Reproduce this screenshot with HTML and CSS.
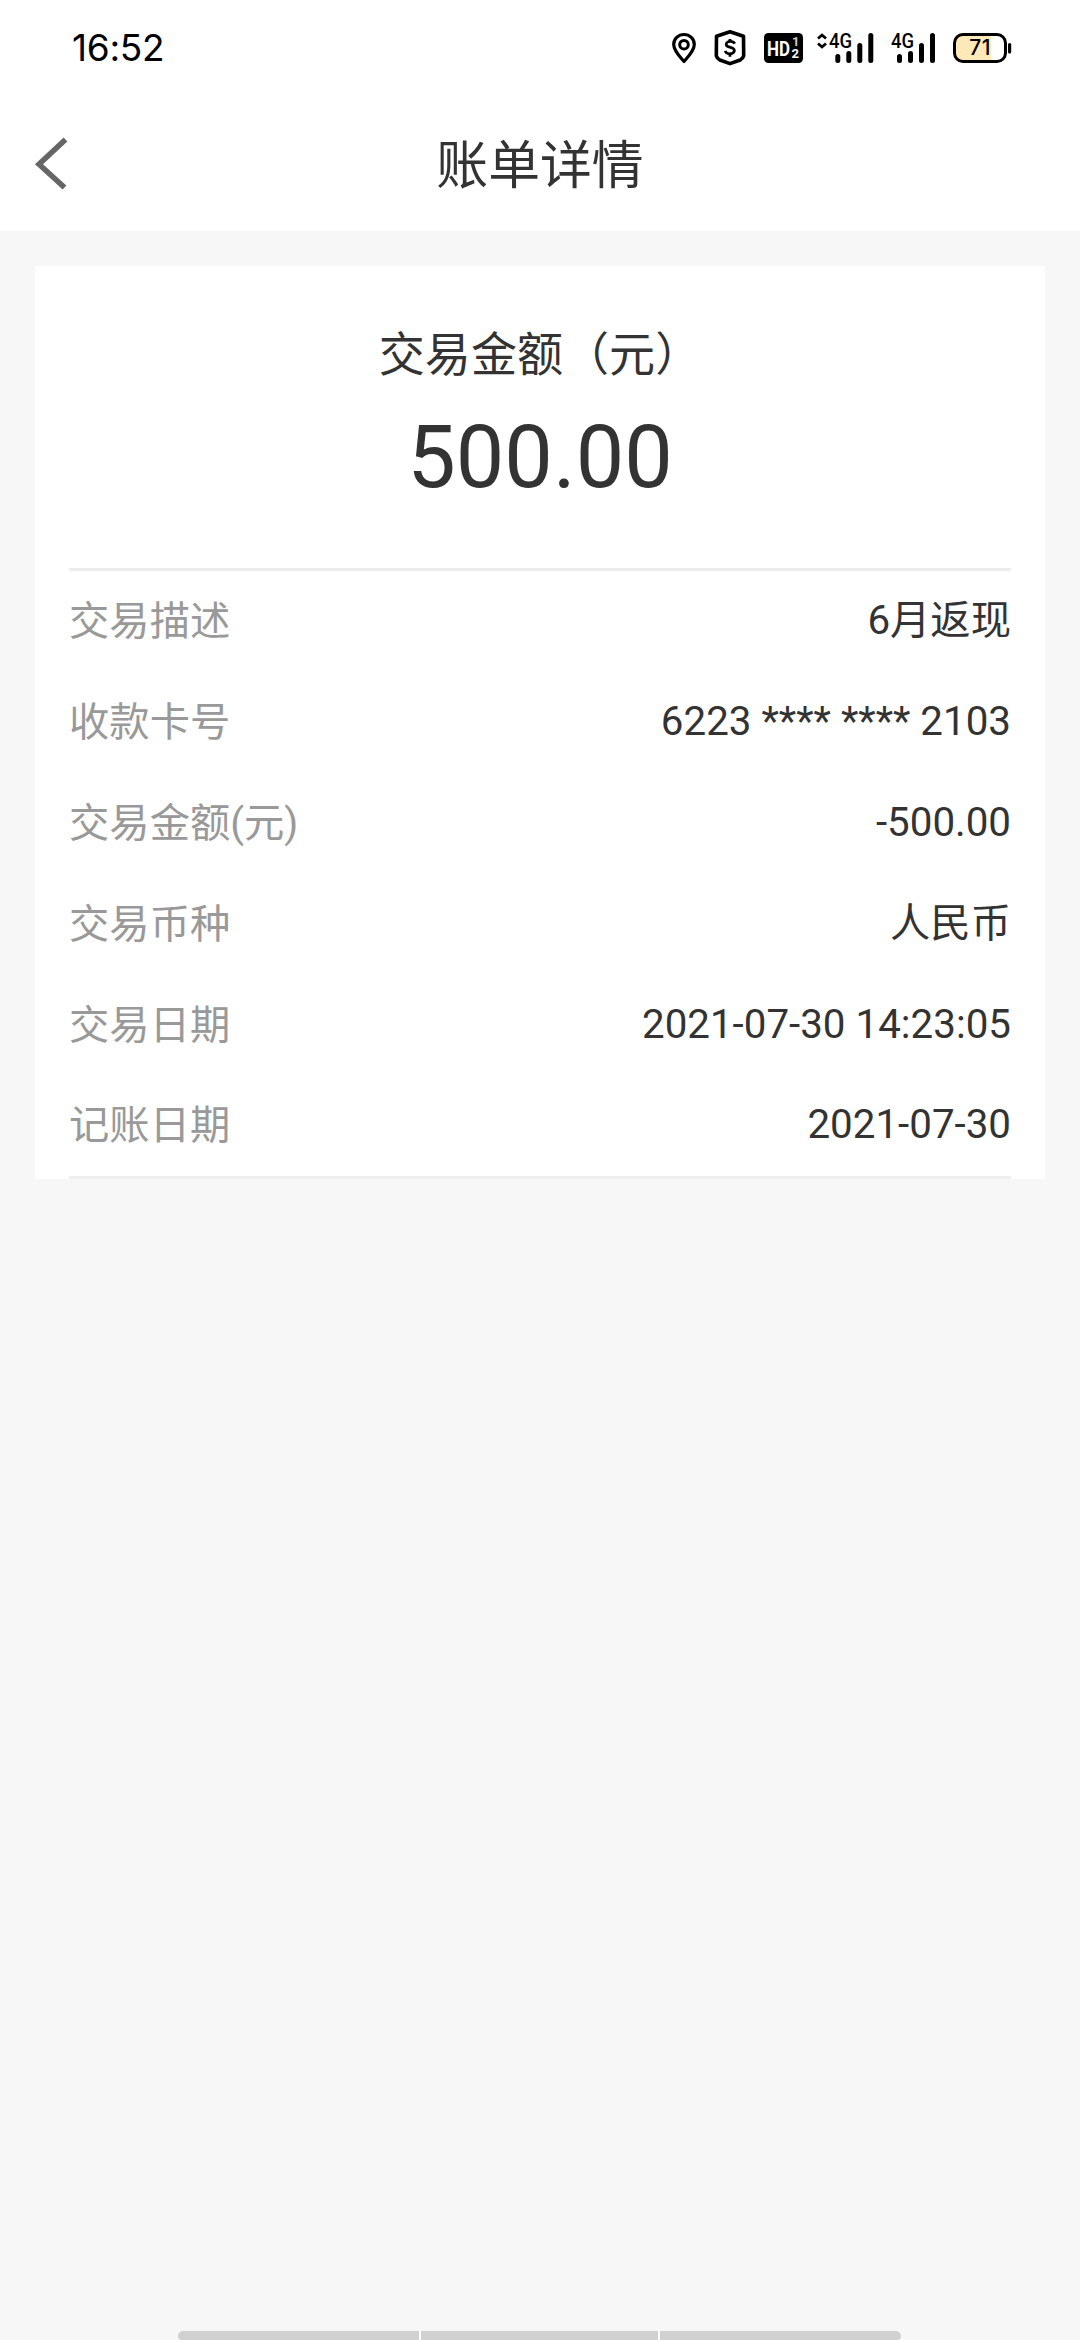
FILE: index.html
```
<!DOCTYPE html>
<html lang="zh-CN">
<head>
<meta charset="utf-8">
<title>账单详情</title>
<link rel="stylesheet" href="styles.css">
</head>
<body>
<div class="status-bar">
  <span class="clock">16:52</span>
  <div class="status-icons">
    <svg class="icon-pin" width="24" height="36" viewBox="0 0 24 36">
      <path d="M12 31.500C7.500 26.300 1.700 20.500 1.700 14.400a10.300 9.900 0 0 1 20.600 0C22.300 20.500 16.500 26.300 12 31.500Z" fill="none" stroke="#000" stroke-width="3.200" stroke-linejoin="round"/>
      <circle cx="12" cy="14.700" r="4.300" fill="none" stroke="#000" stroke-width="3"/>
    </svg>
    <svg class="icon-shield" width="32" height="36" viewBox="0 0 32 36">
      <path d="M16 1.700 29.500 6.200 29.700 25.800Q29 28.400 26.200 30L16 33.600 5.800 30Q3 28.400 2.300 25.800L2.500 6.200Z" fill="none" stroke="#000" stroke-width="3.600" stroke-linejoin="round"/>
      <path d="M20.800 13.700C19.600 11.300 16.500 11 14.300 11.700 11.700 12.600 11.400 15.700 14.200 16.700L18.200 18C21.200 19.200 20.900 22.400 18 23.400 15.500 24.200 12.300 23.700 11 21M16 9v3M16 23.500v3.300" fill="none" stroke="#000" stroke-width="2.800"/>
    </svg>
    <svg class="icon-hd" width="39" height="36" viewBox="0 0 39 36">
      <rect x="0" y="3" width="39" height="30" rx="4.500"/>
      <text class="hd-text" x="3" y="25.700" textLength="23" lengthAdjust="spacingAndGlyphs">HD</text>
      <text class="hd-sub dim" x="28" y="16.300">1</text>
      <text class="hd-sub" x="27.500" y="28.300">2</text>
    </svg>
    <svg class="icon-signal-main" width="57" height="36" viewBox="0 0 57 36">
      <path d="M1 8.500 5 5 9 8.500M1 13.500 5 17 9 13.500" fill="none" stroke="#000" stroke-width="2.800"/>
      <text class="net-text" x="12" y="17.500" textLength="23" lengthAdjust="spacingAndGlyphs">4G</text>
      <path d="M20.800 26.500v4M31.800 23.500v7M42.800 15.500v15M53.800 5.500v25" stroke="#000" stroke-width="5" stroke-linecap="round"/>
    </svg>
    <svg class="icon-signal" width="46" height="36" viewBox="0 0 46 36">
      <text class="net-text" x="1" y="17.500" textLength="23" lengthAdjust="spacingAndGlyphs">4G</text>
      <path d="M9.500 26.500v4M20.500 23.500v7M31.500 15.500v15M42.500 5.500v25" stroke="#000" stroke-width="5" stroke-linecap="round"/>
    </svg>
    <svg class="icon-battery" width="59" height="36" viewBox="0 0 59 36">
      <path d="M10 3H38V33H10Q1 33 1 24V12Q1 3 10 3Z" fill="#ffe9b8"/>
      <rect x="1.500" y="4.500" width="51" height="27" rx="8.500" fill="none" stroke="#000" stroke-width="3"/>
      <rect x="55" y="13" width="3.200" height="10.500" rx="1.500"/>
      <text class="battery-text" x="27" y="25.200" text-anchor="middle">71</text>
    </svg>
  </div>
</div>
<header class="title-bar">
  <svg class="back" width="38" height="56" viewBox="0 0 38 56">
    <path d="M31.500 3.500 5 28.200 30.500 51.500" fill="none" stroke="#666" stroke-width="5.500"/>
  </svg>
  <h1 class="title">账单详情</h1>
</header>
<main class="card">
  <section class="summary">
    <div class="summary-label">交易金额（元）</div>
    <div class="summary-amount">500.00</div>
  </section>
  <dl class="details">
    <div class="row"><dt>交易描述</dt><dd>6月返现</dd></div>
    <div class="row"><dt>收款卡号</dt><dd>6223 **** **** 2103</dd></div>
    <div class="row"><dt>交易金额(元)</dt><dd>-500.00</dd></div>
    <div class="row"><dt>交易币种</dt><dd>人民币</dd></div>
    <div class="row"><dt>交易日期</dt><dd>2021-07-30 14:23:05</dd></div>
    <div class="row"><dt>记账日期</dt><dd>2021-07-30</dd></div>
  </dl>
</main>
<div class="gesture-bar"><i></i><i></i><i></i></div>
</body>
</html>
```

FILE: styles.css
```
* { box-sizing: border-box; }

body {
  margin: 0;
  height: 2340px;
  display: flex;
  flex-direction: column;
  overflow: hidden;
  background: #f7f7f7;
  color: #333;
  font-family: Roboto, "Noto Sans CJK SC", sans-serif;
}

.status-bar {
  height: 96px;
  padding: 0 68px 0 72px;
  display: flex;
  justify-content: space-between;
  align-items: center;
  background: #fff;
  color: #000;
}

.clock {
  font-family: Inter, sans-serif;
  font-size: 37px;
  line-height: 96px;
  letter-spacing: -0.3px;
}

.status-icons { display: flex; }
.icon-shield { margin-left: 18px; }
.icon-hd { margin-left: 18px; }
.icon-signal-main { margin-left: 14px; }
.icon-signal { margin-left: 16px; }
.icon-battery { margin-left: 17px; }

.hd-text { font: 700 21px Roboto, sans-serif; fill: #fff; }
.hd-sub { font: 700 13px Roboto, sans-serif; fill: #fff; }
.dim { fill: #ccc; }
.net-text { font: 500 20px Roboto, sans-serif; }
.battery-text { font: 500 21px Inter, sans-serif; letter-spacing: 0.5px; }

.title-bar {
  height: 135px;
  display: grid;
  grid-template-columns: 80px 1fr 80px;
  align-items: center;
  background: #fff;
}

.back { margin-left: 34px; }

.title {
  margin: 0;
  padding-top: 7px;
  text-align: center;
  font-size: 51.84px;
  font-weight: 400;
  line-height: 76px;
}

.card {
  margin: 35px 35px 0;
  padding: 0 34px;
  background: #fff;
}

.summary {
  height: 305px;
  padding-top: 55px;
  border-bottom: 3px solid #ececec;
  text-align: center;
}

.summary-label { font-size: 46.08px; line-height: 68px; }
.summary-amount { font-size: 86.4px; line-height: 138px; }

.details {
  margin: 0;
  border-bottom: 3px solid #efefef;
}

.row {
  height: 100.8px;
  display: flex;
  justify-content: space-between;
  align-items: center;
  font-size: 40.32px;
  line-height: 60px;
}

.row dt { padding-top: 2px; color: #999; }
.row dd { margin: 0; }

.gesture-bar {
  width: 723px;
  height: 9px;
  margin: auto auto 0 178px;
  display: grid;
  grid-template-columns: 241px 237px 241px;
  gap: 2px;
  border-radius: 5px 5px 4px 4px;
  overflow: hidden;
  background: #fff;
}

.gesture-bar i { background: #d0d0d0; }
```
